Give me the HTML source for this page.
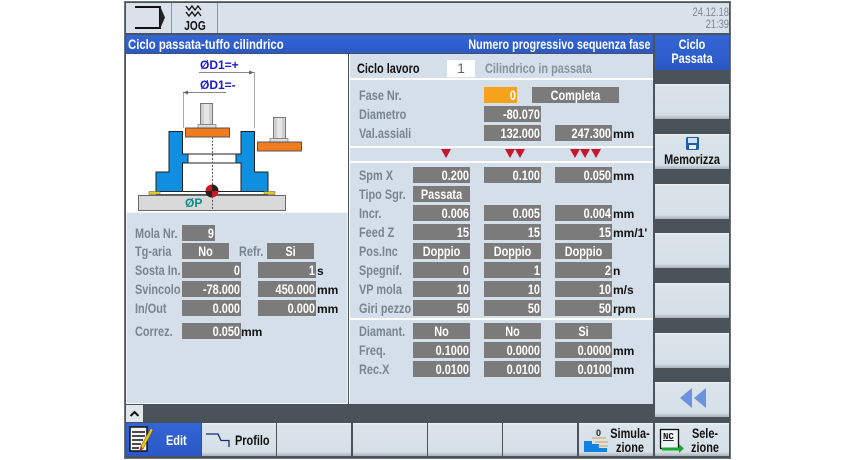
<!DOCTYPE html>
<html><head><meta charset="utf-8">
<style>
html,body{margin:0;padding:0;background:#fff;width:855px;height:460px;overflow:hidden}
body{position:relative;font-family:"Liberation Sans",sans-serif;font-size:14px;font-weight:bold}
div,span{position:absolute;box-sizing:border-box;white-space:nowrap}
.l{color:#78848e;line-height:16px;height:16px;transform:scaleX(.78);transform-origin:0 50%}
.f{background:#7b7b7b;color:#fff;height:16px;line-height:16px;text-align:right;padding-right:1px}
.f b{display:block;transform:scaleX(.78);transform-origin:100% 50%}
.c{text-align:center;padding:0}
.c b{transform-origin:50% 50%}
.u{color:#111;line-height:19px;height:16px;font-size:12px}
.sk{background:linear-gradient(#f0f4f7 0,#dbe4eb 2px,#d5dfe7 88%,#a9b2b9 100%);color:#111;text-align:center}
.v{left:655px;width:74px;height:35px}
.h{top:423px;height:33px;width:74px}
.n{transform:scaleX(.78);line-height:14px;text-align:center}
.tri{width:0;height:0;border-left:5.5px solid transparent;border-right:5.5px solid transparent;border-top:9px solid #c8142c;top:149px}
.dv{background:#fff;height:2px}
</style></head><body>
<div style="left:124px;top:1px;width:607px;height:458px;background:#4a535a;border:1px solid #6e7478"></div>
<!-- top bar -->
<div style="left:126px;top:3px;width:603px;height:30px;background:#d9e2ea"></div>
<div style="left:171px;top:3px;width:1px;height:30px;background:#8d969d"></div>
<div style="left:217px;top:3px;width:1px;height:30px;background:#8d969d"></div>
<svg style="position:absolute;left:126px;top:3px" width="92" height="30" viewBox="0 0 92 30">
<path d="M9 4H34V25H9" fill="none" stroke="#111" stroke-width="2"/><path d="M34 3L39 14.500L34 26Z" fill="#222"/>
<path d="M60 3l3 4 3-4 3 4 3-4 3 4M60 9l3 4 3-4 3 4 3-4 3 4" fill="none" stroke="#111" stroke-width="1.300"/>
</svg>
<div class="n" style="left:172px;top:19px;width:46px;font-size:13px;color:#111">JOG</div>
<div style="left:660px;top:6px;width:69px;text-align:right;color:#7d8790;font-size:12px;line-height:12px;font-weight:normal;transform:scaleX(.78);transform-origin:100% 50%">24.12.18<br>21:39</div>
<!-- header -->
<div style="left:126px;top:35px;width:527px;height:18px;background:linear-gradient(#3566d6,#2a58c6)"></div>
<span style="left:128px;top:35px;color:#fff;line-height:18px;transform:scaleX(.81);transform-origin:0 50%">Ciclo passata-tuffo cilindrico</span>
<span style="right:204px;top:35px;color:#fff;line-height:18px;transform:scaleX(.77);transform-origin:100% 50%">Numero progressivo sequenza fase</span>
<!-- left -->
<div style="left:126px;top:54px;width:222px;height:158px;background:#fff"></div>
<div style="left:126px;top:212px;width:222px;height:192px;background:#d4dfe9;border:1px solid #f2f5f8"></div>
<!-- right panel -->
<div style="left:349px;top:54px;width:304px;height:350px;background:#d4dfe9;border-left:1px solid #fff"></div>
<!-- diagram -->
<svg style="position:absolute;left:126px;top:54px" width="222" height="158" viewBox="126 54 222 158">
<path d="M183.500 92V128M254.500 72V128" stroke="#aaa" fill="none"/>
<path d="M199 72.500H254M183 92.500H226" stroke="#888" fill="none"/>
<path d="M254 72.500l-5-2v4zM183 92.500l5-2v4z" fill="#666"/>
<path d="M182.500 154H241M187.500 163H236M182.500 191.500H241" stroke="#222" fill="none"/>
<path d="M169 131.500H182.500V154H188V163H182.500V191.500H156V172H169Z" fill="#0f8fe0" stroke="#222"/>
<path d="M254.500 131.500H241V154H236V163H241V191.500H268V172H254.500Z" fill="#0f8fe0" stroke="#222"/>
<rect x="138.500" y="195.500" width="147" height="15" fill="#d9d9d9" stroke="#666"/>
<rect x="149" y="191.500" width="11" height="3" fill="#e6c820" stroke="#555" stroke-width=".5"/>
<rect x="264" y="191.500" width="11" height="3" fill="#e6c820" stroke="#555" stroke-width=".5"/>
<path d="M156 194.500H268" stroke="#555" fill="none"/>
<rect x="200.500" y="103.500" width="12" height="21" fill="#cfcfcf" stroke="#777"/>
<rect x="204" y="104" width="5" height="20" fill="#e6e6e6"/>
<rect x="198" y="124.500" width="18" height="3.500" fill="#ddd" stroke="#777" stroke-width=".7"/>
<rect x="185.500" y="128" width="44" height="9" fill="#f07c1e" stroke="#555"/>
<rect x="273.500" y="117.500" width="12" height="21" fill="#cfcfcf" stroke="#777"/>
<rect x="277" y="118" width="5" height="20" fill="#e6e6e6"/>
<rect x="270" y="138.500" width="18" height="3.500" fill="#ddd" stroke="#777" stroke-width=".7"/>
<rect x="257.500" y="142" width="44" height="9" fill="#f07c1e" stroke="#555"/>
<path d="M212.500 137V211" stroke="#555" stroke-dasharray="2 1.500"/>
<circle cx="212" cy="191" r="6.500" fill="#d01525"/>
<path d="M212 184.500A6.500 6.500 0 0 1 218.500 191H212ZM212 197.500A6.500 6.500 0 0 1 205.500 191H212Z" fill="#222"/>
<text x="200" y="69" font-family="Liberation Sans" font-weight="bold" font-size="12" fill="#1a1ad0">ØD1=+</text>
<text x="200" y="89" font-family="Liberation Sans" font-weight="bold" font-size="12" fill="#1a1ad0">ØD1=-</text>
<text x="185" y="207" font-family="Liberation Sans" font-weight="bold" font-size="12" fill="#128a8a">ØP</text>
</svg>
<!-- left params -->
<span class="l" style="left:135px;top:225px">Mola Nr.</span><div class="f" style="left:182px;top:225px;width:33px"><b>9</b></div>
<span class="l" style="left:135px;top:243px">Tg-aria</span><div class="f c" style="left:182px;top:243px;width:47px"><b>No</b></div>
<span class="l" style="left:239px;top:243px">Refr.</span><div class="f c" style="left:267px;top:243px;width:47px"><b>Si</b></div>
<span class="l" style="left:135px;top:262px">Sosta In.</span><div class="f" style="left:182px;top:262px;width:59px"><b>0</b></div><div class="f" style="left:258px;top:262px;width:58px"><b>1</b></div><span class="u" style="left:317px;top:262px">s</span>
<span class="l" style="left:135px;top:281px">Svincolo</span><div class="f" style="left:182px;top:281px;width:59px"><b>-78.000</b></div><div class="f" style="left:258px;top:281px;width:58px"><b>450.000</b></div><span class="u" style="left:317px;top:281px">mm</span>
<span class="l" style="left:135px;top:300px">In/Out</span><div class="f" style="left:182px;top:300px;width:59px"><b>0.000</b></div><div class="f" style="left:258px;top:300px;width:58px"><b>0.000</b></div><span class="u" style="left:317px;top:300px">mm</span>
<span class="l" style="left:135px;top:323px">Correz.</span><div class="f" style="left:182px;top:323px;width:59px"><b>0.050</b></div><span class="u" style="left:241px;top:323px">mm</span>
<!-- right top -->
<span class="l" style="left:357px;top:60px;color:#111">Ciclo lavoro</span>
<div class="n" style="left:447px;top:60px;width:28px;height:17px;background:#fff;color:#666;line-height:17px;transform:none;font-weight:normal">1</div>
<span class="l" style="left:485px;top:60px;color:#87939d">Cilindrico in passata</span>
<div class="dv" style="left:350px;top:78px;width:303px"></div>
<span class="l" style="left:359px;top:87px">Fase Nr.</span><div class="f" style="left:484px;top:87px;width:33px;background:#f7a21b"><b>0</b></div><div class="f c" style="left:532px;top:87px;width:87px"><b>Completa</b></div>
<span class="l" style="left:359px;top:106px">Diametro</span><div class="f" style="left:484px;top:106px;width:57px"><b>-80.070</b></div>
<span class="l" style="left:359px;top:125px">Val.assiali</span><div class="f" style="left:484px;top:125px;width:57px"><b>132.000</b></div><div class="f" style="left:555px;top:125px;width:57px"><b>247.300</b></div><span class="u" style="left:613px;top:125px">mm</span>
<div class="dv" style="left:350px;top:146px;width:303px"></div>
<div class="tri" style="left:441px"></div>
<div class="tri" style="left:505px"></div><div class="tri" style="left:515px"></div>
<div class="tri" style="left:570px"></div><div class="tri" style="left:580px"></div><div class="tri" style="left:591px"></div>
<div class="dv" style="left:350px;top:161px;width:303px"></div>
<!-- rows -->
<span class="l" style="left:359px;top:167px">Spm X</span><div class="f" style="left:413px;top:167px;width:57px"><b>0.200</b></div><div class="f" style="left:484px;top:167px;width:57px"><b>0.100</b></div><div class="f" style="left:555px;top:167px;width:57px"><b>0.050</b></div><span class="u" style="left:613px;top:167px">mm</span>
<span class="l" style="left:359px;top:186px">Tipo Sgr.</span><div class="f c" style="left:413px;top:186px;width:57px"><b>Passata</b></div>
<span class="l" style="left:359px;top:205px">Incr.</span><div class="f" style="left:413px;top:205px;width:57px"><b>0.006</b></div><div class="f" style="left:484px;top:205px;width:57px"><b>0.005</b></div><div class="f" style="left:555px;top:205px;width:57px"><b>0.004</b></div><span class="u" style="left:613px;top:205px">mm</span>
<span class="l" style="left:359px;top:224px">Feed Z</span><div class="f" style="left:413px;top:224px;width:57px"><b>15</b></div><div class="f" style="left:484px;top:224px;width:57px"><b>15</b></div><div class="f" style="left:555px;top:224px;width:57px"><b>15</b></div><span class="u" style="left:613px;top:224px">mm/1'</span>
<span class="l" style="left:359px;top:243px">Pos.Inc</span><div class="f c" style="left:413px;top:243px;width:57px"><b>Doppio</b></div><div class="f c" style="left:484px;top:243px;width:57px"><b>Doppio</b></div><div class="f c" style="left:555px;top:243px;width:57px"><b>Doppio</b></div>
<span class="l" style="left:359px;top:262px">Spegnif.</span><div class="f" style="left:413px;top:262px;width:57px"><b>0</b></div><div class="f" style="left:484px;top:262px;width:57px"><b>1</b></div><div class="f" style="left:555px;top:262px;width:57px"><b>2</b></div><span class="u" style="left:613px;top:262px">n</span>
<span class="l" style="left:359px;top:281px">VP mola</span><div class="f" style="left:413px;top:281px;width:57px"><b>10</b></div><div class="f" style="left:484px;top:281px;width:57px"><b>10</b></div><div class="f" style="left:555px;top:281px;width:57px"><b>10</b></div><span class="u" style="left:613px;top:281px">m/s</span>
<span class="l" style="left:359px;top:300px">Giri pezzo</span><div class="f" style="left:413px;top:300px;width:57px"><b>50</b></div><div class="f" style="left:484px;top:300px;width:57px"><b>50</b></div><div class="f" style="left:555px;top:300px;width:57px"><b>50</b></div><span class="u" style="left:613px;top:300px">rpm</span>
<div class="dv" style="left:350px;top:318px;width:303px"></div>
<span class="l" style="left:359px;top:323px">Diamant.</span><div class="f c" style="left:413px;top:323px;width:57px"><b>No</b></div><div class="f c" style="left:484px;top:323px;width:57px"><b>No</b></div><div class="f c" style="left:555px;top:323px;width:57px"><b>Si</b></div>
<span class="l" style="left:359px;top:342px">Freq.</span><div class="f" style="left:413px;top:342px;width:57px"><b>0.1000</b></div><div class="f" style="left:484px;top:342px;width:57px"><b>0.0000</b></div><div class="f" style="left:555px;top:342px;width:57px"><b>0.0000</b></div><span class="u" style="left:613px;top:342px">mm</span>
<span class="l" style="left:359px;top:361px">Rec.X</span><div class="f" style="left:413px;top:361px;width:57px"><b>0.0100</b></div><div class="f" style="left:484px;top:361px;width:57px"><b>0.0100</b></div><div class="f" style="left:555px;top:361px;width:57px"><b>0.0100</b></div><span class="u" style="left:613px;top:361px">mm</span>
<!-- vertical softkeys -->
<div class="v" style="top:35px;background:linear-gradient(#3566d6,#2a58c6)"></div>
<div class="n" style="left:655px;top:37px;width:74px;color:#fff">Ciclo<br>Passata</div>
<div class="sk v" style="top:84px"></div>
<div class="sk v" style="top:134px"></div>
<div class="n" style="left:655px;top:152px;width:74px;color:#111">Memorizza</div>
<svg style="position:absolute;left:685px;top:136px" width="15" height="15" viewBox="0 0 15 15"><rect x="1" y="1" width="13" height="13" rx="1.500" fill="#1f5ea8"/><rect x="3" y="2" width="9" height="5" fill="#cfe0f0"/><rect x="4" y="9" width="7" height="4" fill="#e8eef3"/></svg>
<div class="sk v" style="top:184px"></div>
<div class="sk v" style="top:233px"></div>
<div class="sk v" style="top:283px"></div>
<div class="sk v" style="top:333px"></div>
<div class="sk v" style="top:382px"></div>
<svg style="position:absolute;left:680px;top:388px" width="26" height="20" viewBox="0 0 26 20"><path d="M12 0V20L0 10ZM26 0V20L14 10Z" fill="#6c93e0"/></svg>
<!-- bottom -->
<div style="left:126px;top:405px;width:17px;height:17px;background:#dfe6ec"></div>
<svg style="position:absolute;left:126px;top:405px" width="17" height="17"><path d="M4.500 11L8.500 7L12.500 11" fill="none" stroke="#111" stroke-width="2"/></svg>
<div class="h" style="left:126px;width:75px;background:linear-gradient(#3566d6,#2a58c6)"></div>
<div class="n" style="left:166px;top:433px;width:21px;color:#fff;text-align:left;transform-origin:0 50%">Edit</div>
<svg style="position:absolute;left:128px;top:425px" width="26" height="29" viewBox="0 0 26 29"><path d="M2 2H19V26H2Z" fill="#f4f4f4" stroke="#111" stroke-width="1.500"/><path d="M4 7H17M4 11H17M4 15H15M4 19H13M4 23H11" stroke="#111" stroke-width="1.500"/><path d="M23 3L25 5L15 24L12 25L13 21Z" fill="#f2c20f" stroke="#444" stroke-width=".5"/><path d="M12 25L13 21L15 24Z" fill="#c8142c"/></svg>
<div class="sk h" style="left:202px"></div>
<div class="n" style="left:235px;top:433px;color:#111;text-align:left;transform-origin:0 50%">Profilo</div>
<svg style="position:absolute;left:205px;top:430px" width="26" height="22"><path d="M1 4H13L16 10.500H24V17" fill="none" stroke="#1c2a70" stroke-width="1.300"/></svg>
<div class="sk h" style="left:277px"></div>
<div class="sk h" style="left:353px"></div>
<div class="sk h" style="left:428px"></div>
<div class="sk h" style="left:503px"></div>
<div class="sk h" style="left:579px"></div>
<div class="n" style="left:601px;top:426px;width:58px;color:#111">Simula-<br>zione</div>
<svg style="position:absolute;left:584px;top:426px" width="26" height="28" viewBox="0 0 26 28"><path d="M0 26V15H8V18H15V22H23V26Z" fill="#1282e0"/><path d="M8 12H22M11 16H24M14 20H24" stroke="#d9a050" stroke-width="1"/><text x="12" y="10" font-family="Liberation Sans" font-size="9" font-weight="bold" fill="#222">0</text></svg>
<div class="sk h" style="left:655px"></div>
<div class="n" style="left:681px;top:426px;width:48px;color:#111">Sele-<br>zione</div>
<svg style="position:absolute;left:659px;top:428px" width="26" height="26" viewBox="0 0 26 26"><rect x="1.500" y="1.500" width="18" height="19" fill="#eef2f5" stroke="#111" stroke-width="1.300"/><text x="4" y="11" font-family="Liberation Mono" font-size="9" font-weight="bold" fill="#111" text-decoration="underline">NC</text><path d="M3 21H20" stroke="#17a82c" stroke-width="3"/><path d="M20 16L25 20.500L20 25Z" fill="#17a82c"/></svg>
</body></html>
